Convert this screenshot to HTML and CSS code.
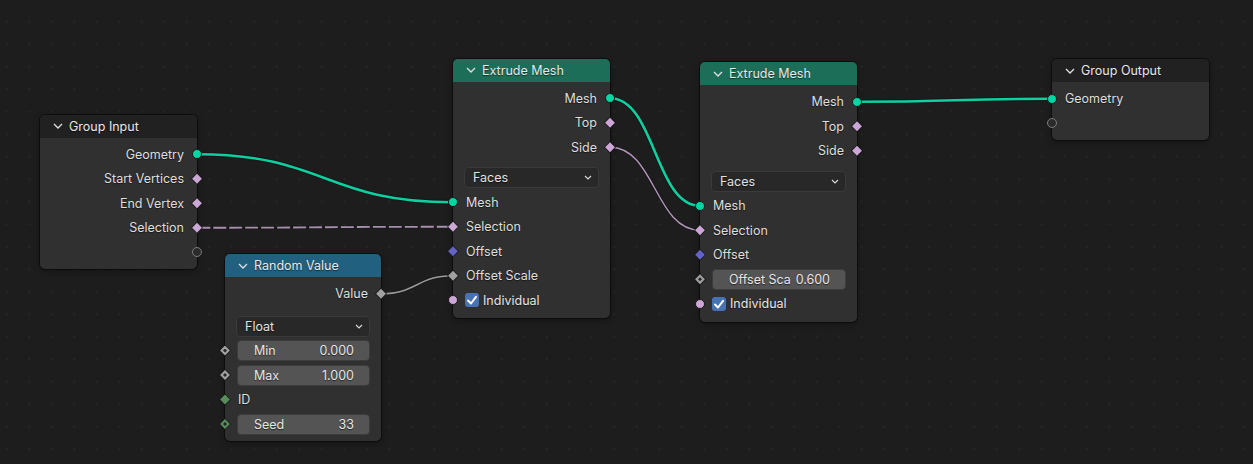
FILE: index.html
```html
<!DOCTYPE html>
<html>
<head>
<meta charset="utf-8">
<link rel="stylesheet" href="styles.css">
</head>
<body>
<div class="canvas">
  <svg class="links" width="1253" height="464" viewBox="0 0 1253 464">
    <g class="outline">
      <path d="M197 154.25 C325 154.25 325 202.25 453 202.25"/>
      <path d="M610 98.25 C655 98.25 655 205.75 700 205.75"/>
      <path d="M857 101.75 C954.5 101.75 954.5 98.75 1052 98.75"/>
      <path class="thin" d="M381 293.75 C417 293.75 417 275.75 453 275.75"/>
      <path class="thin" d="M610 147.25 C655 147.25 655 230.25 700 230.25"/>
      <path class="thin" d="M197 227.75 C325 227.75 325 226.75 453 226.75"/>
    </g>
    <path class="lk geo" d="M197 154.25 C325 154.25 325 202.25 453 202.25"/>
    <path class="lk geo" d="M610 98.25 C655 98.25 655 205.75 700 205.75"/>
    <path class="lk geo" d="M857 101.75 C954.5 101.75 954.5 98.75 1052 98.75"/>
    <path class="lk flt" d="M381 293.75 C417 293.75 417 275.75 453 275.75"/>
    <path class="lk bool" d="M610 147.25 C655 147.25 655 230.25 700 230.25"/>
    <path class="lk dash" d="M197 227.75 C325 227.75 325 226.75 453 226.75"/>
  </svg>

  <!-- Group Input -->
  <div class="node n-gin">
    <div class="head head-group"><svg class="chev" width="10" height="6" viewBox="0 0 10 6"><polyline points="1,1 5,5 9,1"/></svg>Group Input</div>
    <div class="body">
      <div class="row out"><span>Geometry</span><i class="sock c geo"></i></div>
      <div class="row out"><span>Start Vertices</span><i class="sock d bool"></i></div>
      <div class="row out"><span>End Vertex</span><i class="sock d bool"></i></div>
      <div class="row out"><span>Selection</span><i class="sock d bool"></i></div>
      <div class="row out"><i class="sock empty"></i></div>
    </div>
  </div>

  <!-- Random Value -->
  <div class="node n-rand">
    <div class="head head-blue"><svg class="chev" width="10" height="6" viewBox="0 0 10 6"><polyline points="1,1 5,5 9,1"/></svg>Random Value</div>
    <div class="body">
      <div class="row out"><span>Value</span><i class="sock d flt"></i></div>
      <div class="row menu menu-rand"><div class="dd"><span>Float</span><svg class="ddchev" width="8" height="5" viewBox="0 0 8 5"><polyline points="1,1 4,4 7,1"/></svg></div></div>
      <div class="row in"><i class="sock d flt dot"></i><div class="field"><span>Min</span><span>0.000</span></div></div>
      <div class="row in"><i class="sock d flt dot"></i><div class="field"><span>Max</span><span>1.000</span></div></div>
      <div class="row in"><i class="sock d int"></i><span class="lbl">ID</span></div>
      <div class="row in"><i class="sock d int dot"></i><div class="field"><span>Seed</span><span>33</span></div></div>
    </div>
  </div>

  <!-- Extrude Mesh 1 -->
  <div class="node n-ext1">
    <div class="head head-green"><svg class="chev" width="10" height="6" viewBox="0 0 10 6"><polyline points="1,1 5,5 9,1"/></svg>Extrude Mesh</div>
    <div class="body body-ext">
      <div class="row out"><span>Mesh</span><i class="sock c geo"></i></div>
      <div class="row out"><span>Top</span><i class="sock d bool"></i></div>
      <div class="row out"><span>Side</span><i class="sock d bool"></i></div>
      <div class="row menu"><div class="dd"><span>Faces</span><svg class="ddchev" width="8" height="5" viewBox="0 0 8 5"><polyline points="1,1 4,4 7,1"/></svg></div></div>
      <div class="row in"><i class="sock c geo"></i><span class="lbl">Mesh</span></div>
      <div class="row in"><i class="sock d bool"></i><span class="lbl">Selection</span></div>
      <div class="row in"><i class="sock d vec"></i><span class="lbl">Offset</span></div>
      <div class="row in"><i class="sock d flt"></i><span class="lbl">Offset Scale</span></div>
      <div class="row in"><i class="sock c bool"></i><span class="check"><svg width="14" height="14" viewBox="0 0 14 14"><polyline points="3,7.5 6,10.5 11,3.8"/></svg></span><span class="chklbl">Individual</span></div>
    </div>
  </div>

  <!-- Extrude Mesh 2 -->
  <div class="node n-ext2">
    <div class="head head-green"><svg class="chev" width="10" height="6" viewBox="0 0 10 6"><polyline points="1,1 5,5 9,1"/></svg>Extrude Mesh</div>
    <div class="body body-ext">
      <div class="row out"><span>Mesh</span><i class="sock c geo"></i></div>
      <div class="row out"><span>Top</span><i class="sock d bool"></i></div>
      <div class="row out"><span>Side</span><i class="sock d bool"></i></div>
      <div class="row menu"><div class="dd"><span>Faces</span><svg class="ddchev" width="8" height="5" viewBox="0 0 8 5"><polyline points="1,1 4,4 7,1"/></svg></div></div>
      <div class="row in"><i class="sock c geo"></i><span class="lbl">Mesh</span></div>
      <div class="row in"><i class="sock d bool"></i><span class="lbl">Selection</span></div>
      <div class="row in"><i class="sock d vec"></i><span class="lbl">Offset</span></div>
      <div class="row in"><i class="sock d flt dot"></i><div class="field"><span>Offset Sca</span><span>0.600</span></div></div>
      <div class="row in"><i class="sock c bool"></i><span class="check"><svg width="14" height="14" viewBox="0 0 14 14"><polyline points="3,7.5 6,10.5 11,3.8"/></svg></span><span class="chklbl">Individual</span></div>
    </div>
  </div>

  <!-- Group Output -->
  <div class="node n-gout">
    <div class="head head-group"><svg class="chev" width="10" height="6" viewBox="0 0 10 6"><polyline points="1,1 5,5 9,1"/></svg>Group Output</div>
    <div class="body">
      <div class="row in"><i class="sock c geo"></i><span class="lbl">Geometry</span></div>
      <div class="row in"><i class="sock empty"></i></div>
    </div>
  </div>
</div>
</body>
</html>
```

FILE: styles.css
```css
html, body {
  margin: 0;
  padding: 0;
  background: #1d1d1d;
}

.canvas {
  position: relative;
  width: 1253px;
  height: 464px;
  overflow: hidden;
  background-color: #1d1d1d;
  background-image: radial-gradient(circle at 50% 50%, #282828 0.9px, transparent 1.2px);
  background-size: 22.5px 22.5px;
  background-position: -4.5px 10.5px;
  font-family: "Inter", "DejaVu Sans", sans-serif;
  font-size: 12.5px;
  color: #dedede;
}

.links {
  position: absolute;
  left: 0;
  top: 0;
}

.links path {
  fill: none;
}

.outline path {
  stroke: #151515;
  stroke-width: 4.5;
  opacity: 0.8;
}

.outline path.thin {
  stroke-width: 3.2;
  opacity: 0.6;
}

.lk.geo {
  stroke: #10cf9f;
  stroke-width: 2.6;
}

.lk.flt {
  stroke: #9a9a9a;
  stroke-width: 1.5;
}

.lk.bool {
  stroke: #b596bd;
  stroke-width: 1.4;
}

.lk.dash {
  stroke: #a88fae;
  stroke-width: 1.8;
  stroke-dasharray: 13 3;
}

/* Nodes */
.node {
  position: absolute;
  width: 157px;
  background: #303030;
  border-radius: 5px;
  box-shadow: 0 0 0 1px rgba(0, 0, 0, 0.45), 0 2px 6px rgba(0, 0, 0, 0.35);
  text-shadow: 0 1px 1px rgba(0, 0, 0, 0.55);
}

.n-gin { left: 40px; top: 114.5px; }
.n-rand { left: 225px; top: 254px; width: 156px; }
.n-ext1 { left: 453px; top: 58.5px; }
.n-ext2 { left: 700px; top: 62px; }
.n-gout { left: 1052px; top: 59px; }

.head {
  height: 23px;
  display: flex;
  align-items: center;
  padding-left: 13px;
  border-radius: 5px 5px 0 0;
  color: #e8e8e8;
}

.head-group { background: #212121; }
.head-green { background: #1c6e59; }
.head-blue { background: #22607f; }

.chev {
  margin-right: 6px;
  fill: none;
  stroke: #e0e0e0;
  stroke-width: 1.3;
}

.body {
  display: flex;
  flex-direction: column;
  padding: 4.5px 0 4.5px;
}

.body-ext {
  padding-bottom: 5.5px;
}

.row {
  position: relative;
  height: 24.5px;
  display: flex;
  align-items: center;
  white-space: nowrap;
}

.row.out {
  justify-content: flex-end;
  padding-right: 13px;
}

.row.menu {
  margin-top: 6px;
}

.row.menu-rand {
  margin-top: 7.75px;
}

.lbl {
  padding-left: 13px;
}

/* Sockets */
.sock {
  position: absolute;
  display: block;
  box-sizing: border-box;
}

.sock.c,
.sock.empty {
  top: calc(50% - 5px);
  width: 10px;
  height: 10px;
  border-radius: 50%;
}

.out .sock.c, .out .sock.empty { right: -5px; }
.in .sock.c, .in .sock.empty { left: -5px; }

.sock.c {
  border: 1px solid #181818;
}

.sock.c.geo { background: #00d6a3; }
.sock.c.bool { background: #cca6d6; }

.sock.empty {
  border: 1.4px solid #7c7c7c;
  background: #2b2b2b;
}

.sock.d {
  top: calc(50% - 6px);
  width: 12px;
  height: 12px;
  background: #181818;
  clip-path: polygon(50% 0, 100% 50%, 50% 100%, 0 50%);
}

.out .sock.d { right: -6px; }
.in .sock.d { left: -6px; }

.sock.d::before {
  content: "";
  position: absolute;
  left: 1.1px;
  top: 1.1px;
  right: 1.1px;
  bottom: 1.1px;
  clip-path: polygon(50% 0, 100% 50%, 50% 100%, 0 50%);
}

.sock.d.bool::before { background: #cca6d6; }
.sock.d.flt::before { background: #a1a1a1; }
.sock.d.vec::before { background: #6363c7; }
.sock.d.int::before { background: #598c5c; }

.sock.dot::after {
  content: "";
  position: absolute;
  left: 4px;
  top: 4px;
  width: 4px;
  height: 4px;
  background: #262626;
  clip-path: polygon(50% 0, 100% 50%, 50% 100%, 0 50%);
}

/* Widgets */
.dd {
  flex: 1;
  height: 21px;
  margin: 0 11px 0 11px;
  box-sizing: border-box;
  background: #282828;
  border: 1px solid #3a3a3a;
  border-radius: 4px;
  display: flex;
  align-items: center;
  justify-content: space-between;
  padding: 0 6px 0 8px;
  color: #e2e2e2;
}

.ddchev {
  fill: none;
  stroke: #d8d8d8;
  stroke-width: 1.2;
}

.field {
  flex: 1;
  height: 21px;
  margin: 0 11px 0 12px;
  box-sizing: border-box;
  background: #545454;
  border: 1px solid #3c3c3c;
  border-radius: 4px;
  display: flex;
  align-items: center;
  justify-content: space-between;
  padding: 0 15px 0 16px;
  color: #e6e6e6;
}

.check {
  width: 14px;
  height: 14px;
  margin-left: 12px;
  background: #4772b3;
  border-radius: 3px;
  display: flex;
}

.check polyline {
  fill: none;
  stroke: #ffffff;
  stroke-width: 2;
  stroke-linecap: round;
  stroke-linejoin: round;
}

.chklbl {
  margin-left: 4px;
  color: #e6e6e6;
}
```
